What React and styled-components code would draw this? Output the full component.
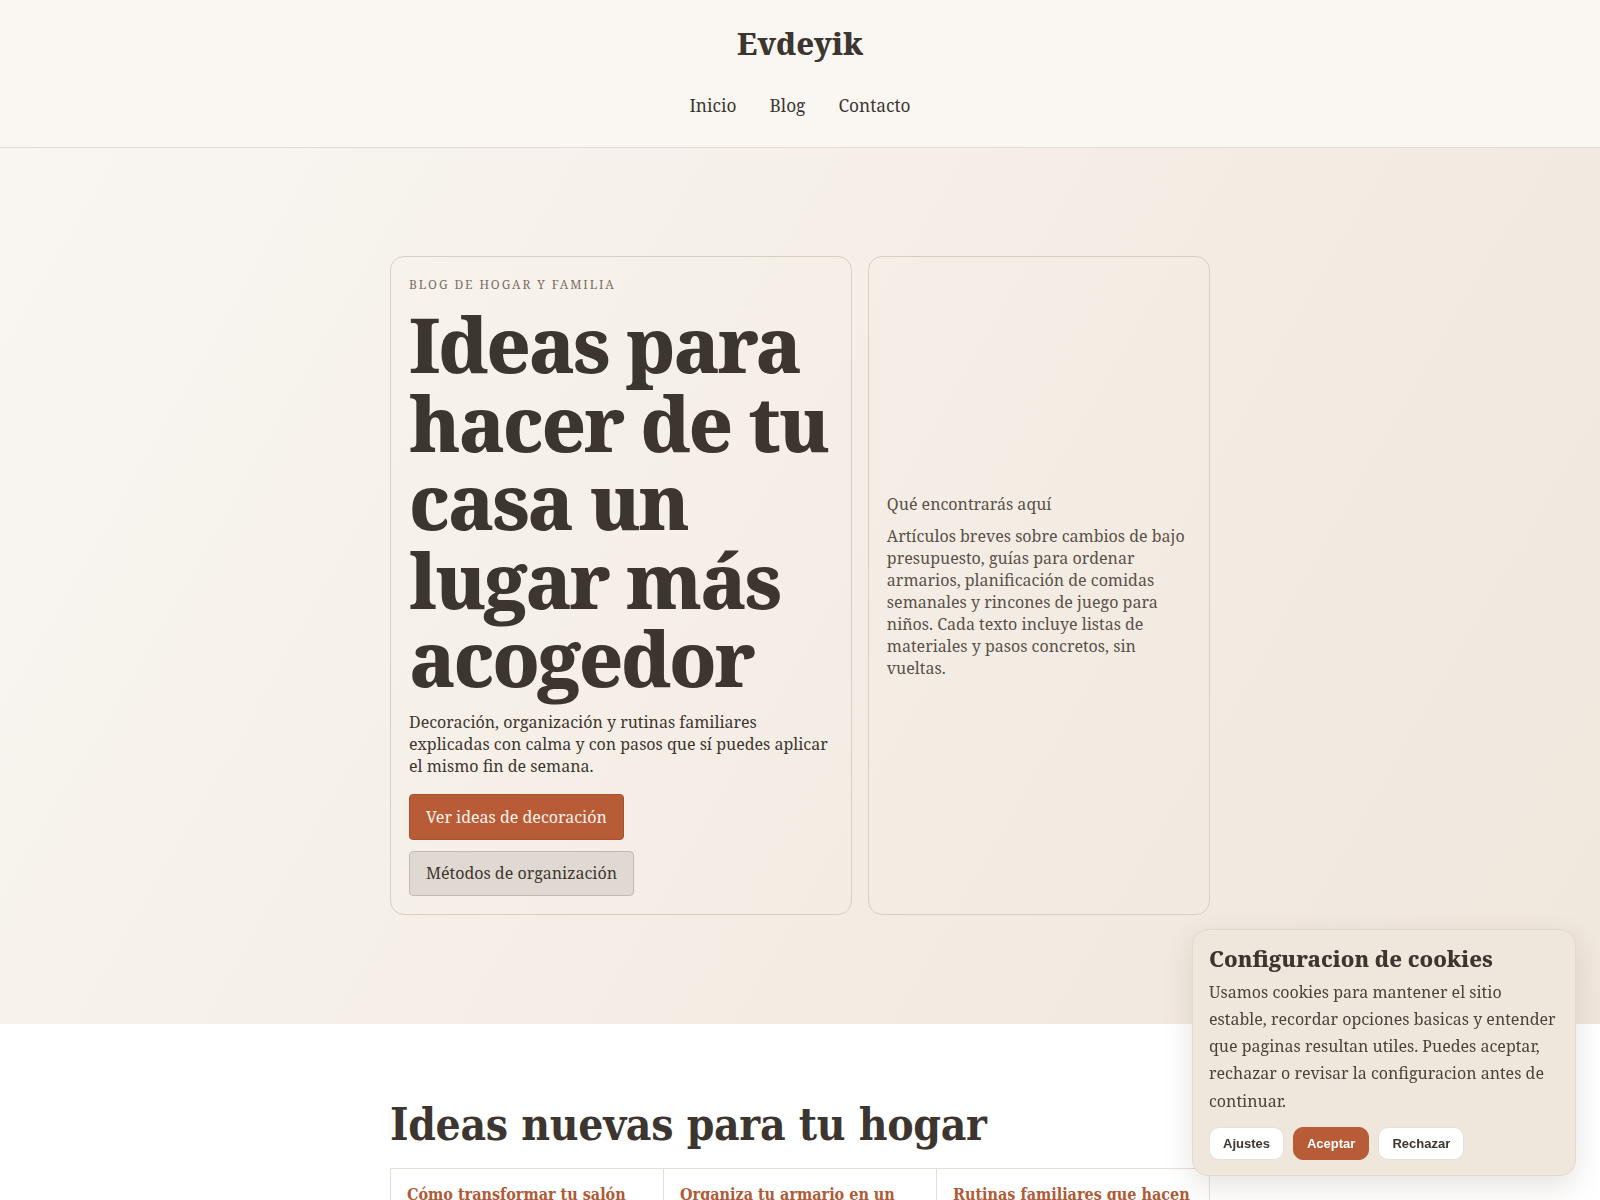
import React from 'react';
import styled, { createGlobalStyle } from 'styled-components';

const GlobalStyle = createGlobalStyle`
    * { box-sizing: border-box; }
    body {
        margin: 0;
        background: #ffffff;
        color: #3d3630;
        font-family: "Noto Serif", "DejaVu Serif", "Liberation Serif", serif;
    }
`;

const Header = styled.header`
    background: #faf7f2;
    border-bottom: 1px solid #e2dcd3;
    padding: 25px 0 30px;
    text-align: center;
`;

const Logo = styled.div`
    font-size: 30.5px;
    font-weight: 800;
    line-height: 1.2;
    color: #3d3630;
`;

const Nav = styled.nav`
    display: flex;
    justify-content: center;
    gap: 33px;
    margin-top: 33px;
`;

const NavLink = styled.a`
    font-size: 17.3px;
    line-height: 1.3;
    color: #3d3630;
    text-decoration: none;
`;

const Hero = styled.section`
    background: linear-gradient(120deg, #f9f6f1 0%, #f4ede5 55%, #f0e7dd 100%);
    padding: 108px 0 109px;
`;

const Container = styled.div`
    max-width: 820px;
    margin: 0 auto;
`;

const HeroGrid = styled.div`
    display: grid;
    grid-template-columns: 1.35fr 1fr;
    gap: 16px;
`;

const Card = styled.div`
    border: 1px solid #d6cfc6;
    border-radius: 14px;
    padding: 18px;
    display: flex;
    flex-direction: column;
    justify-content: ${(p) => (p.$center ? 'center' : 'flex-start')};
`;

const Eyebrow = styled.div`
    font-size: 12px;
    letter-spacing: 1.9px;
    text-transform: uppercase;
    color: #7a6e63;
    margin-top: 1px;
`;

const HeroTitle = styled.h1`
    font-size: 76px;
    line-height: 78.6px;
    font-weight: 800;
    letter-spacing: -0.03em;
    margin: 12px 0 13px;
    color: #3d3630;
`;

const Lead = styled.p`
    font-size: 16px;
    line-height: 22px;
    margin: 0 0 17px;
    color: #3d3630;
`;

const Actions = styled.div`
    display: flex;
    flex-wrap: wrap;
    gap: 11px;
`;

const Button = styled.a`
    display: inline-block;
    font-size: 16px;
    line-height: ${(p) => (p.$primary ? '22px' : '21px')};
    padding: 11px 16px;
    border-radius: 4px;
    text-decoration: none;
    background: ${(p) => (p.$primary ? '#b85c38' : '#e0d9d2')};
    color: ${(p) => (p.$primary ? '#fbf3ec' : '#3d3630')};
    border: 1px solid ${(p) => (p.$primary ? '#a9502f' : '#c3bbb3')};
`;

const AsideTitle = styled.div`
    font-size: 16px;
    color: #5a5048;
    margin-bottom: 10px;
`;

const AsideText = styled.p`
    font-size: 16px;
    line-height: 22px;
    margin: 0;
    color: #5a5048;
`;

const Latest = styled.section`
    background: #ffffff;
    padding: 75px 0 60px;
`;

const SectionTitle = styled.h2`
    font-family: "DejaVu Serif Condensed", "DejaVu Serif", serif;
    font-stretch: condensed;
    font-size: 44px;
    font-weight: 700;
    letter-spacing: -0.3px;
    line-height: 1.2;
    margin: 0 0 16px;
    color: #3d3630;
`;

const PostGrid = styled.div`
    display: grid;
    grid-template-columns: repeat(3, 1fr);
    border-top: 1px solid #e7dfd4;
    border-left: 1px solid #e7dfd4;
`;

const Post = styled.article`
    border-right: 1px solid #e7dfd4;
    border-bottom: 1px solid #e7dfd4;
    padding: 16px 16px 20px;
`;

const PostTitle = styled.h3`
    font-family: "DejaVu Serif Condensed", "DejaVu Serif", serif;
    font-stretch: condensed;
    font-size: 16px;
    font-weight: 700;
    line-height: 1.3;
    margin: 0;
    color: #b05a36;
`;

const Cookie = styled.div`
    position: fixed;
    right: 24px;
    bottom: 24px;
    width: 384px;
    background: #efe6dc;
    border: 1px solid #e2d8cc;
    border-radius: 16px;
    padding: 14px 16px 15px;
    box-shadow: 0 10px 30px rgba(80, 60, 40, 0.14);
`;

const CookieTitle = styled.h4`
    font-size: 21.8px;
    font-weight: 800;
    margin: 0 0 6px;
    color: #3d3630;
`;

const CookieText = styled.p`
    font-size: 16px;
    line-height: 27.3px;
    margin: 0 0 12px;
    color: #4a423b;
`;

const CookieActions = styled.div`
    display: flex;
    gap: 9px;
`;

const CookieButton = styled.button`
    font-family: "Liberation Sans", Arial, sans-serif;
    font-size: 13px;
    font-weight: 700;
    padding: 8px 13px;
    border-radius: 10px;
    border: 1px solid ${(p) => (p.$accept ? '#b85c38' : '#e8e0d6')};
    background: ${(p) => (p.$accept ? '#b85c38' : '#ffffff')};
    color: ${(p) => (p.$accept ? '#ffffff' : '#3d3630')};
    cursor: pointer;
`;

const posts = [
    'Cómo transformar tu salón con poco presupuesto',
    'Organiza tu armario en un fin de semana',
    'Rutinas familiares que hacen la semana más fácil',
];

export default function App() {
    return (
        <>
            <GlobalStyle />
            <Header>
                <Logo>Evdeyik</Logo>
                <Nav>
                    <NavLink href="#">Inicio</NavLink>
                    <NavLink href="#">Blog</NavLink>
                    <NavLink href="#">Contacto</NavLink>
                </Nav>
            </Header>
            <Hero>
                <Container>
                    <HeroGrid>
                        <Card>
                            <Eyebrow>Blog de hogar y familia</Eyebrow>
                            <HeroTitle>Ideas para hacer de tu casa un lugar más acogedor</HeroTitle>
                            <Lead>
                                Decoración, organización y rutinas familiares explicadas con calma y con pasos que sí puedes aplicar el mismo fin de semana.
                            </Lead>
                            <Actions>
                                <Button $primary href="#">Ver ideas de decoración</Button>
                                <Button href="#">Métodos de organización</Button>
                            </Actions>
                        </Card>
                        <Card $center>
                            <AsideTitle>Qué encontrarás aquí</AsideTitle>
                            <AsideText>
                                Artículos breves sobre cambios de bajo presupuesto, guías para ordenar armarios, planificación de comidas semanales y rincones de juego para niños. Cada texto incluye listas de materiales y pasos concretos, sin vueltas.
                            </AsideText>
                        </Card>
                    </HeroGrid>
                </Container>
            </Hero>
            <Latest>
                <Container>
                    <SectionTitle>Ideas nuevas para tu hogar</SectionTitle>
                    <PostGrid>
                        {posts.map((title) => (
                            <Post key={title}>
                                <PostTitle>{title}</PostTitle>
                            </Post>
                        ))}
                    </PostGrid>
                </Container>
            </Latest>
            <Cookie>
                <CookieTitle>Configuracion de cookies</CookieTitle>
                <CookieText>
                    Usamos cookies para mantener el sitio estable, recordar opciones basicas y entender que paginas resultan utiles. Puedes aceptar, rechazar o revisar la configuracion antes de continuar.
                </CookieText>
                <CookieActions>
                    <CookieButton>Ajustes</CookieButton>
                    <CookieButton $accept>Aceptar</CookieButton>
                    <CookieButton>Rechazar</CookieButton>
                </CookieActions>
            </Cookie>
        </>
    );
}
